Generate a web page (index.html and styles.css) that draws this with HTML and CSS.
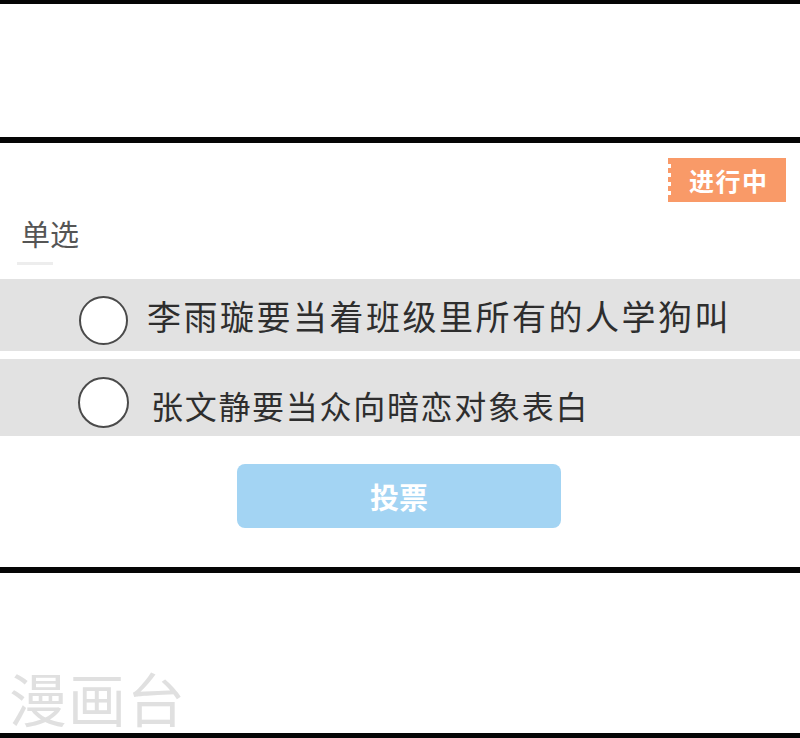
FILE: index.html
```html
<!DOCTYPE html>
<html lang="zh">
<head>
<meta charset="utf-8">
<link rel="stylesheet" href="styles.css">
</head>
<body>
<div class="page">
  <div class="rule rule-top"></div>
  <div class="blank-panel"></div>
  <div class="rule"></div>
  <section class="poll">
    <div class="badge-row"><span class="badge">进行中</span></div>
    <div class="type-label">单选</div>
    <div class="type-underline"></div>
    <div class="option option-1">
      <span class="radio"></span>
      <span class="option-text text-1">李雨璇要当着班级里所有的人学狗叫</span>
    </div>
    <div class="option option-2">
      <span class="radio radio-2"></span>
      <span class="option-text text-2">张文静要当众向暗恋对象表白</span>
    </div>
    <div class="btn-row"><button class="vote-btn">投票</button></div>
  </section>
  <div class="rule"></div>
  <div class="footer-panel"><span class="watermark">漫画台</span></div>
  <div class="rule rule-bottom"></div>
</div>
</body>
</html>
```
FILE: styles.css
```css
* { box-sizing: border-box; margin: 0; padding: 0; }
html, body { background: #fff; }
body {
  width: 800px;
  height: 738px;
  overflow: hidden;
  font-family: "Noto Sans CJK SC", "Noto Sans", sans-serif;
}
.page { display: flex; flex-direction: column; width: 800px; height: 738px; }
.rule { height: 6px; background: #050505; flex: none; }
.rule-top { height: 4px; }
.rule-bottom { height: 5px; }
.blank-panel { height: 133px; flex: none; }
.poll { height: 424px; flex: none; display: flex; flex-direction: column; }
.badge-row { display: flex; justify-content: flex-end; padding: 15px 14px 0 0; height: 59px; }
.badge {
  position: relative;
  width: 118px;
  height: 44px;
  background: #f99a68;
  color: #fff;
  font-weight: 700;
  font-size: 25px;
  line-height: 44px;
  padding-left: 21px;
  letter-spacing: 1.5px;
}
.badge::before {
  content: "";
  position: absolute;
  left: 0; top: 6px; bottom: 6px;
  width: 3px;
  background: repeating-linear-gradient(to bottom, #fff 0 4px, transparent 4px 9px);
}
.type-label {
  font-size: 29px;
  color: #555;
  line-height: 36px;
  padding-left: 21px;
  height: 36px;
  margin-top: 13px;
}
.type-underline {
  width: 36px;
  height: 3px;
  background: #ededed;
  margin: 11px 0 14px 17px;
}
.option { display: flex; align-items: center; background: #e2e2e2; }
.option-1 { height: 72px; padding-left: 79px; margin-bottom: 8px; }
.option-2 { height: 77px; padding-left: 78px; }
.radio {
  width: 49px; height: 49px;
  border-radius: 50%;
  border: 2px solid #4a4a4a;
  background: #fff;
  flex: none;
  margin-top: 10px;
}
.radio-2 { width: 51px; height: 51px; }
.option-text { color: #2e2e2e; white-space: nowrap; }
.text-1 { font-size: 34px; letter-spacing: 2.5px; margin-left: 19px; }
.text-2 { font-size: 32px; letter-spacing: 1.7px; margin-left: 22px; margin-top: 14px; }
.btn-row { display: flex; justify-content: center; padding-top: 28px; }
.vote-btn {
  width: 324px; height: 64px;
  border: none; border-radius: 8px;
  background: #a3d4f3;
  color: #fff;
  font-family: inherit;
  font-weight: 700;
  font-size: 29px;
  margin-left: -2px;
}
.footer-panel { flex: 1; display: flex; align-items: flex-end; padding: 0 0 4px 9px; }
.watermark { font-size: 58px; color: #e0e0e0; line-height: 64px; letter-spacing: 1px; }
```
